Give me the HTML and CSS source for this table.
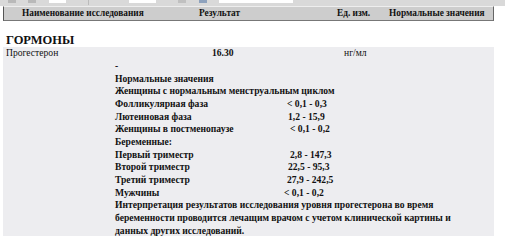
FILE: index.html
```html
<!DOCTYPE html>
<html lang="ru">
<head>
<meta charset="utf-8">
<link rel="stylesheet" href="styles.css">
</head>
<body>
<div class="toolbar">
  <span class="tb-icon i1"></span>
  <span class="tb-icon i2"></span>
  <span class="tb-box b1"></span>
  <span class="tb-sep"></span>
  <span class="tb-box b2"></span>
  <span class="tb-icon i3"></span>
  <span class="tb-icon i4"></span>
  <span class="tb-box b3"></span>
</div>
<div class="header">
  <span class="h-name">Наименование исследования</span>
  <span class="h-res">Результат</span>
  <span class="h-unit">Ед. изм.</span>
  <span class="h-norm">Нормальные значения</span>
</div>
<h2 class="section">ГОРМОНЫ</h2>
<div class="panel">
  <div class="row">
    <span class="r-name">Прогестерон</span>
    <span class="r-res">16.30</span>
    <span class="r-unit">нг/мл</span>
  </div>
  <div class="details">
    <div class="line">-</div>
    <div class="line">Нормальные значения</div>
    <div class="line">Женщины с нормальным менструальным циклом</div>
    <div class="line kv"><span>Фолликулярная фаза</span><span class="v v1">&lt; 0,1 - 0,3</span></div>
    <div class="line kv"><span>Лютеиновая фаза</span><span class="v v2">1,2 - 15,9</span></div>
    <div class="line kv"><span>Женщины в постменопаузе</span><span class="v v3">&lt; 0,1 - 0,2</span></div>
    <div class="line">Беременные:</div>
    <div class="line kv"><span>Первый триместр</span><span class="v v3">2,8 - 147,3</span></div>
    <div class="line kv"><span>Второй триместр</span><span class="v v2">22,5 - 95,3</span></div>
    <div class="line kv"><span>Третий триместр</span><span class="v v1">27,9 - 242,5</span></div>
    <div class="line kv"><span>Мужчины</span><span class="v v0">&lt; 0,1 - 0,2</span></div>
    <div class="line">Интерпретация результатов исследования уровня прогестерона во время<br>беременности проводится лечащим врачом с учетом клинической картины и<br>данных других исследований.</div>
  </div>
</div>
</body>
</html>
```

FILE: styles.css
```css
html, body {
  margin: 0;
  padding: 0;
  background: #ffffff;
}
body {
  width: 505px;
  height: 240px;
  overflow: hidden;
  font-family: "Liberation Serif", "Times New Roman", serif;
  color: #111;
}
.toolbar {
  height: 6px;
  background: #d9d9d9;
  display: flex;
  align-items: flex-start;
}
.tb-icon {
  width: 8px;
  height: 3px;
  background: #b9b9b9;
  margin-left: 6px;
}
.i1 { margin-left: 8px; }
.i2 { margin-left: 12px; }
.tb-box {
  height: 3px;
  background: #ffffff;
}
.b1 { width: 17px; margin-left: 13px; }
.tb-sep { width: 1px; height: 5px; background: #bbb; margin-left: 22px; }
.b2 { width: 27px; margin-left: 40px; }
.i3 { margin-left: 22px; background: #c0c0c0; }
.i4 { margin-left: 13px; background: #8ea2bd; }
.b3 { width: 74px; margin-left: 12px; }
.header {
  margin-left: 3px;
  height: 13px;
  background: #cdcdcd;
  border-left: 1px solid #555;
  border-right: 1px solid #666;
  border-bottom: 1px solid #777;
  border-top: 1px solid #eeeeee;
  display: grid;
  grid-template-columns: 177px 138px 52px 1fr;
  padding-left: 18px;
  box-sizing: content-box;
  width: 471px;
  font-weight: bold;
  font-size: 9.3px;
  line-height: 13px;
  white-space: nowrap;
}
.section {
  margin: 12px 0 0 6px;
  font-size: 12.5px;
  line-height: 14px;
  font-weight: bold;
}
.panel {
  margin: 0 0 0 3px;
  width: 491px;
  height: 189px;
  background: #ededf0;
  font-size: 9.6px;
}
.row {
  display: grid;
  grid-template-columns: 206px 132px 1fr;
  padding-left: 3px;
  height: 12px;
  line-height: 12px;
  white-space: nowrap;
}
.r-res { font-weight: bold; }
.details {
  margin: 1px 0 0 112px;
  font-weight: bold;
  line-height: 12.67px;
  white-space: nowrap;
}
.kv {
  display: grid;
  grid-template-columns: 172px 1fr;
}
.v0 { margin-left: -3px; }
.v1 { margin-left: 0; }
.v2 { margin-left: 1px; }
.v3 { margin-left: 3px; }
```
